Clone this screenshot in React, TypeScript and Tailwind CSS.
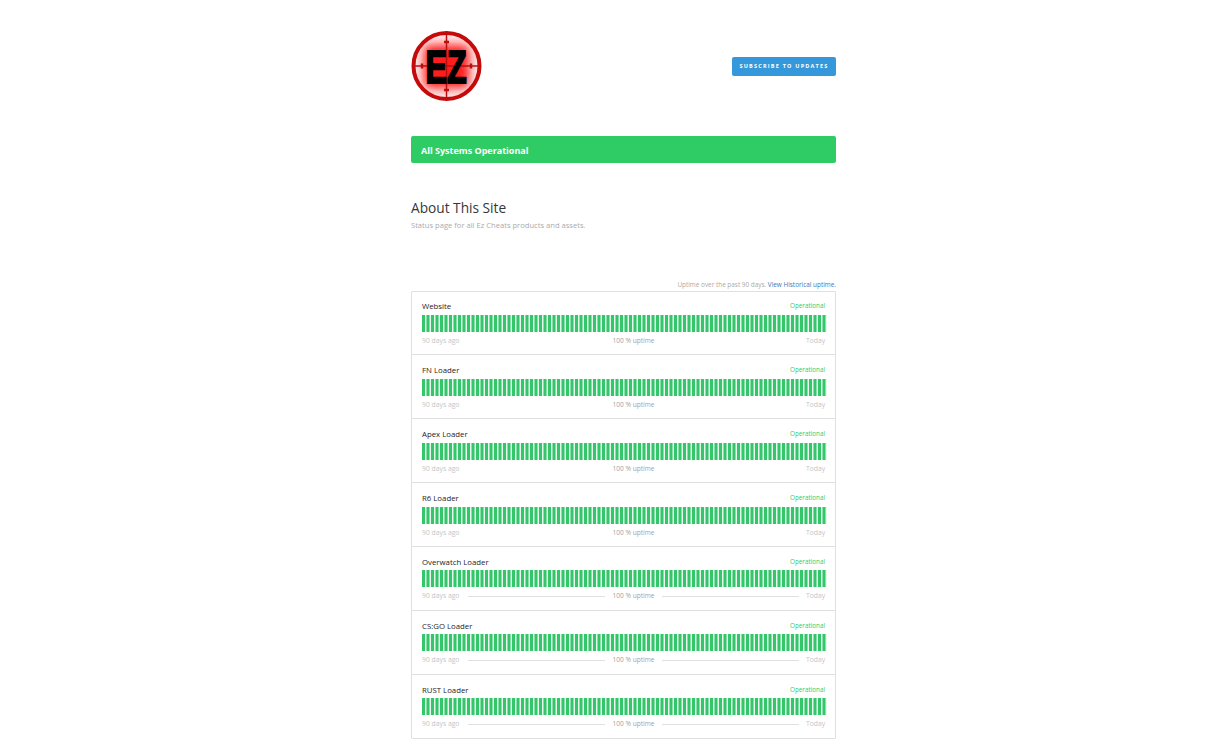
const components = [
  { name: "Website", line: false },
  { name: "FN Loader", line: false },
  { name: "Apex Loader", line: false },
  { name: "R6 Loader", line: false },
  { name: "Overwatch Loader", line: true },
  { name: "CS:GO Loader", line: true },
  { name: "RUST Loader", line: true },
]

function Logo() {
  return (
    <svg width="71" height="72" viewBox="0 0 71 72" className="block overflow-visible">
      <defs>
        <filter id="soft" x="-30%" y="-30%" width="160%" height="160%">
          <feGaussianBlur stdDeviation="5" />
        </filter>
        <clipPath id="inner">
          <circle cx="35.5" cy="36" r="33" />
        </clipPath>
      </defs>
      <circle cx="35.5" cy="36" r="33" fill="#ffe6e6" />
      <g clipPath="url(#inner)">
        <rect x="13" y="15" width="45" height="43" rx="6" fill="#ff1a1a" filter="url(#soft)" />
      </g>
      <circle cx="35.5" cy="36" r="33" fill="none" stroke="#c40a0a" strokeWidth="4" />
      <path d="M35.5 3v66M2 36h67" stroke="#b90f0f" strokeWidth="1.5" />
      <path d="M33 12h5M33 60h5M11 33.5v5M60 33.5v5" stroke="#b90f0f" strokeWidth="2.5" />
      <g transform="translate(35 53) scale(0.7 1)">
        <text
          x="0"
          y="0"
          textAnchor="middle"
          fontFamily="'Liberation Sans', sans-serif"
          fontWeight="700"
          fontSize="46"
          fill="#000000"
          stroke="#000000"
          strokeWidth="2"
        >
          EZ
        </text>
      </g>
    </svg>
  )
}

function UptimeBars() {
  return (
    <svg width="405" height="17" viewBox="0 0 405 17" className="block">
      <rect x="0" y="0" width="405" height="17" fill="#e4f8eb" />
      {Array.from({ length: 90 }).map((_, i) => (
        <rect key={i} x={i * 4.5} y="0" width="3" height="17" fill="#35c56b" />
      ))}
    </svg>
  )
}

function ComponentRow({ name, line, first, last }: { name: string; line: boolean; first: boolean; last: boolean }) {
  return (
    <div
      className={`px-[10px] ${first ? "h-[63px] pt-[10px]" : last ? "h-[63px] pt-[11px]" : "h-[64px] pt-[11px]"} ${
        last ? "" : "border-b border-[#e0e0e0]"
      }`}
    >
      <div className="flex items-center justify-between h-[10px]">
        <span className="text-[7.8px] text-[#1f2226] leading-none">{name}</span>
        <span className="text-[6.3px] text-[#2fcc66] leading-none -mt-[2px]">Operational</span>
      </div>
      <div className={line ? "mt-[2px]" : "mt-[3px]"}>
        <UptimeBars />
      </div>
      <div className="flex items-center mt-[5px] h-[8px] text-[6.8px] leading-none text-[#c4c6c9]">
        <span className="w-[39px] whitespace-nowrap">90 days ago</span>
        <span className={`flex-1 mx-[7px] h-px ${line ? "bg-[#e0e0e0]" : ""}`} />
        <span className="text-[6.6px] text-[#a0a4a8] whitespace-nowrap">100 % uptime</span>
        <span className={`flex-1 mx-[7px] h-px ${line ? "bg-[#e0e0e0]" : ""}`} />
        <span className="w-[19px] text-right">Today</span>
      </div>
    </div>
  )
}

export default function App() {
  return (
    <div className="h-[745px] overflow-hidden bg-white font-['Open_Sans','Lato',sans-serif]">
      <div className="w-[425px] ml-[411px]">
        <div className="flex items-center justify-between pt-[30px] h-[102px]">
          <Logo />
          <button className="w-[104px] h-[19px] pt-[2px] rounded-[2px] bg-[#3498db] text-white text-[5.5px] font-bold tracking-[0.22em] uppercase leading-none whitespace-nowrap">
            Subscribe to updates
          </button>
        </div>

        <div className="mt-[34px] h-[27px] rounded-[2px] bg-[#2fcc66] flex items-center px-[10px] pt-[2px] text-white text-[9px] font-bold">
          All Systems Operational
        </div>

        <h2 className="mt-[36px] text-[13.7px] leading-[18px] text-[#33383d]">
          About This Site
        </h2>
        <p className="mt-[3px] text-[7.6px] leading-[10px] text-[#aaaaaa]">
          Status page for all Ez Cheats products and assets.
        </p>

        <div className="mt-[50px] h-[11px] text-right text-[6.4px] leading-[10px] text-[#aaaaaa]">
          Uptime over the past 90 days.{" "}
          <a href="#" className="text-[#3a78b8]">View Historical uptime.</a>
        </div>

        <div className="border border-[#e0e0e0] rounded-[1px]">
          {components.map((c, i) => (
            <ComponentRow
              key={c.name}
              name={c.name}
              line={c.line}
              first={i === 0}
              last={i === components.length - 1}
            />
          ))}
        </div>
      </div>
    </div>
  )
}
